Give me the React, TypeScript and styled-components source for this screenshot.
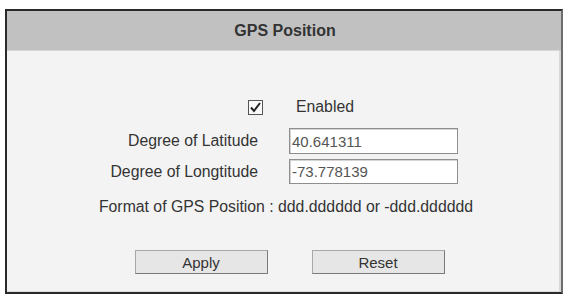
import React from 'react'
import styled, { createGlobalStyle } from 'styled-components'

const GlobalStyle = createGlobalStyle`
  html, body {
    margin: 0;
    padding: 0;
    background: #ffffff;
    font-family: "Liberation Sans", Arial, sans-serif;
  }
`

const Frame = styled.section`
  box-sizing: border-box;
  margin: 9px 0 0 5px;
  width: 558px;
  height: 285px;
  display: flex;
  flex-direction: column;
  background: #f3f3f3;
  border: 2px solid #2a2a2a;
  border-right-color: #6d6d6d;
  box-shadow: inset -2px 0 0 #d8d8d8, inset 0 -1px 0 #dcdcdc;
`

const Header = styled.header`
  height: 39px;
  display: flex;
  align-items: center;
  justify-content: center;
  background: #c1c1c1;
  border-bottom: 1px solid #d6d6d6;
`

const Title = styled.h1`
  margin: 0;
  font-size: 16px;
  font-weight: bold;
  color: #333;
  padding-left: 2px;
`

const Body = styled.div`
  flex: 1;
  display: flex;
  flex-direction: column;
  padding-top: 47px;
`

const FormGrid = styled.div`
  display: grid;
  grid-template-columns: 251px 169px;
  column-gap: 31px;
  row-gap: 5px;
  align-items: center;
`

const Label = styled.label`
  justify-self: end;
  font-size: 15.8px;
  color: #333;
  line-height: 18px;
`

const CheckCell = styled.div`
  justify-self: end;
  margin-right: -5px;
  margin-bottom: 7px;
  display: flex;
`

const CheckBox = styled.span`
  box-sizing: border-box;
  width: 15px;
  height: 15px;
  border: 1px solid #555;
  background: #fafafa;
  display: flex;
  align-items: center;
  justify-content: center;
`

const CheckText = styled.span`
  font-size: 15.8px;
  color: #333;
  line-height: 18px;
  padding-left: 7px;
  margin-bottom: 7px;
`

const Field = styled.input<{ $h: number }>`
  box-sizing: border-box;
  width: 169px;
  height: ${p => p.$h}px;
  padding: 0 0 0 2px;
  border: 1px solid #8e8e8e;
  box-shadow: inset 1px 1px 0 #d4d4d4;
  background: #fff;
  font-family: "Liberation Sans", Arial, sans-serif;
  font-size: 15px;
  color: #555;
  outline: none;
`

const Note = styled.p`
  margin: 14px 0 0 0;
  text-align: center;
  font-size: 15.8px;
  line-height: 18px;
  color: #333;
  padding-left: 4px;
`

const Actions = styled.div`
  display: flex;
  justify-content: center;
  gap: 44px;
  margin-top: 34px;
  padding-left: 11px;
`

const Button = styled.button`
  box-sizing: border-box;
  width: 133px;
  height: 24px;
  border: 1px solid #7a7a7a;
  border-top-color: #a8a8a8;
  border-left-color: #a8a8a8;
  background: #e6e6e6;
  font-family: "Liberation Sans", Arial, sans-serif;
  font-size: 15px;
  color: #333;
  padding: 0;
`

const Check = () => (
  <svg width="13" height="13" viewBox="0 0 13 13">
    <path d="M2 6.5 L5 10 L11 2" fill="none" stroke="#222" strokeWidth="2" />
  </svg>
)

export default function App() {
  return (
    <>
      <GlobalStyle />
      <Frame>
        <Header>
          <Title>GPS Position</Title>
        </Header>
        <Body>
          <FormGrid>
            <CheckCell>
              <CheckBox>
                <Check />
              </CheckBox>
            </CheckCell>
            <CheckText>Enabled</CheckText>
            <Label>Degree of Latitude</Label>
            <Field $h={26} defaultValue="40.641311" />
            <Label>Degree of Longtitude</Label>
            <Field $h={25} defaultValue="-73.778139" />
          </FormGrid>
          <Note>Format of GPS Position : ddd.dddddd or -ddd.dddddd</Note>
          <Actions>
            <Button>Apply</Button>
            <Button>Reset</Button>
          </Actions>
        </Body>
      </Frame>
    </>
  )
}
